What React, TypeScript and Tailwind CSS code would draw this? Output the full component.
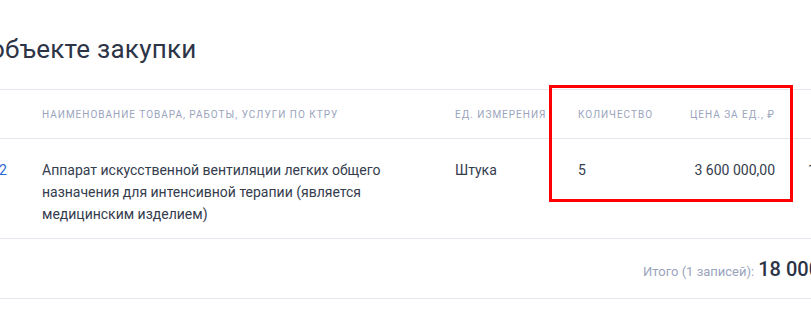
import React from "react";

export default function App() {
  return (
    <div className="relative w-[811px] h-[313px] overflow-hidden bg-white" style={{ fontFamily: "Roboto, 'Liberation Sans', sans-serif" }}>
      <div className="flex h-[89px] items-start pt-[33px]">
        <h2 className="ml-[-10px] whitespace-nowrap text-[26px] leading-[32px] tracking-[0.01em] text-[#2c3446]">объекте закупки</h2>
      </div>
      <div className="border-t border-[#e6e6ef]">
        <div className="flex h-[48px] items-center whitespace-nowrap text-[10px] uppercase tracking-[0.1em] text-[#9aa4bd]">
          <div className="w-[42px] shrink-0" />
          <div className="w-[413px] shrink-0">Наименование товара, работы, услуги по КТРУ</div>
          <div className="w-[123px] shrink-0">Ед. измерения</div>
          <div className="w-[110px] shrink-0">Количество</div>
          <div className="w-[87px] shrink-0 text-right">Цена за ед., ₽</div>
        </div>
        <div className="flex h-[100px] items-start border-t border-[#e6e6ef] pt-[20px] text-[14px] leading-[22px] text-[#343c4e]">
          <div className="ml-[-1px] w-[43px] shrink-0 text-[#2a6ad8]">2</div>
          <div className="w-[413px] shrink-0 pr-[60px]">
            Аппарат искусственной вентиляции легких общего назначения для интенсивной терапии (является медицинским изделием)
          </div>
          <div className="w-[123px] shrink-0">Штука</div>
          <div className="w-[110px] shrink-0">5</div>
          <div className="w-[87px] shrink-0 whitespace-nowrap text-right">3 600 000,00</div>
          <div className="ml-[33px] shrink-0">1</div>
        </div>
        <div className="flex h-[61px] items-center justify-start whitespace-nowrap border-t border-[#e6e6ef] border-b">
          <div className="ml-[643px] flex items-baseline gap-[4px]">
            <span className="text-[13px] text-[#9aa4bd]">Итого (1 записей):</span>
            <span className="text-[20px] font-medium text-[#2c3446]">18 000 000,00</span>
          </div>
        </div>
      </div>
      <div className="absolute left-[549px] top-[85px] h-[117px] w-[244px] border-[3px] border-[#ff0000]" />
    </div>
  );
}
